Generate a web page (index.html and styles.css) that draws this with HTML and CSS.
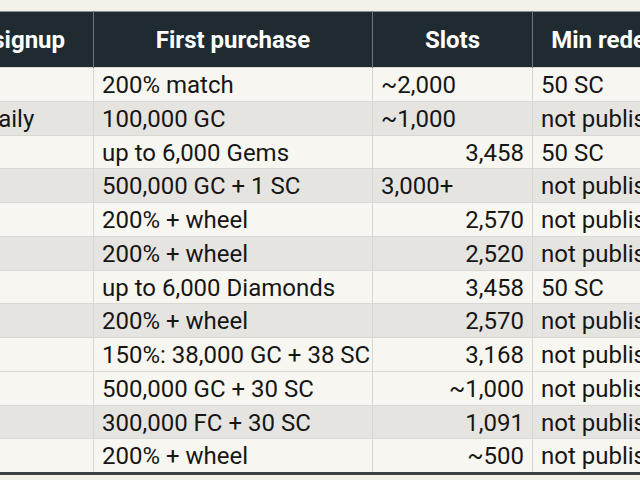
FILE: index.html
```html
<!DOCTYPE html>
<html lang="en">
<head>
<meta charset="utf-8">
<title>Sweepstakes casino comparison</title>
<link rel="stylesheet" href="styles.css">
</head>
<body>
<div class="frame">
<table class="compare">
  <colgroup>
    <col class="c-signup">
    <col class="c-first">
    <col class="c-slots">
    <col class="c-min">
  </colgroup>
  <thead>
    <tr>
      <th>Free on signup</th>
      <th>First purchase</th>
      <th>Slots</th>
      <th>Min redemption</th>
    </tr>
  </thead>
  <tbody>
    <tr class="lt"><td>7,777 GC</td><td>200% match</td><td class="txt">~2,000</td><td>50 SC</td></tr>
    <tr class="dk"><td>10K GC, daily</td><td>100,000 GC</td><td class="txt">~1,000</td><td>not published</td></tr>
    <tr class="lt"><td>Gems</td><td>up to 6,000 Gems</td><td class="num">3,458</td><td>50 SC</td></tr>
    <tr class="dk"><td>GC + SC</td><td>500,000 GC + 1 SC</td><td class="txt">3,000+</td><td>not published</td></tr>
    <tr class="lt"><td>wheel</td><td>200% + wheel</td><td class="num">2,570</td><td>not published</td></tr>
    <tr class="dk"><td>wheel</td><td>200% + wheel</td><td class="num">2,520</td><td>not published</td></tr>
    <tr class="lt"><td>Gems</td><td>up to 6,000 Diamonds</td><td class="num">3,458</td><td>50 SC</td></tr>
    <tr class="dk"><td>wheel</td><td>200% + wheel</td><td class="num">2,570</td><td>not published</td></tr>
    <tr class="lt"><td>GC + SC</td><td>150%: 38,000 GC + 38 SC</td><td class="num">3,168</td><td>not published</td></tr>
    <tr class="lt"><td>GC + SC</td><td>500,000 GC + 30 SC</td><td class="num">~1,000</td><td>not published</td></tr>
    <tr class="dk"><td>FC + SC</td><td>300,000 FC + 30 SC</td><td class="num">1,091</td><td>not published</td></tr>
    <tr class="lt"><td>wheel</td><td>200% + wheel</td><td class="num">~500</td><td>not published</td></tr>
  </tbody>
</table>
</div>
</body>
</html>
```

FILE: styles.css
```css
html, body {
  margin: 0;
  padding: 0;
  overflow: hidden;
  background: #f4f1e9;
}

.frame {
  padding-top: 11px;
  width: 640px;
  height: 480px;
  overflow: hidden;
}

.compare {
  margin-left: -115px;
  border-collapse: collapse;
  table-layout: fixed;
  width: 855px;
  font-family: Roboto, "Liberation Sans", sans-serif;
  font-size: 24px;
  color: #161616;
  border-top: 1px solid #8a8f91;
  border-bottom: 3px solid #3b4043;
}

.c-signup { width: 208px; }
.c-first { width: 279px; }
.c-slots { width: 160px; }
.c-min { width: 208px; }

.compare th {
  background: #1f2a31;
  color: #ffffff;
  font-weight: 700;
  line-height: 28px;
  padding: 14px 8px 13px;
  text-align: center;
  border-left: 1px solid #6d7579;
  border-right: 1px solid #6d7579;
  white-space: nowrap;
}

.compare th:first-child {
  padding-left: 0;
  padding-right: 8px;
}

.compare td {
  line-height: 27.75px;
  padding: 4px 8px 1px;
  text-align: left;
  border: 1px solid #d9d8d3;
  white-space: nowrap;
  overflow: hidden;
}

.compare tr.lt td { background: #f8f6f0; }
.compare tr.dk td { background: #e5e4e0; }

.compare td.num { text-align: right; }
.compare td.txt { text-align: left; }
```
